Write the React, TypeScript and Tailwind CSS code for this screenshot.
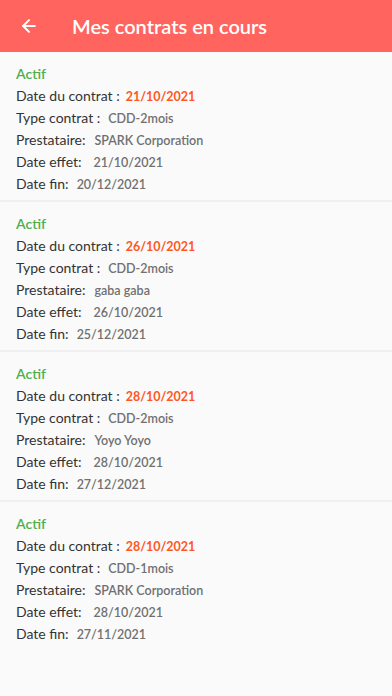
import { ArrowLeft } from "lucide-react";

type Contract = {
  date: string;
  type: string;
  provider: string;
  start: string;
  end: string;
};

const contracts: Contract[] = [
  { date: "21/10/2021", type: "CDD-2mois", provider: "SPARK Corporation", start: "21/10/2021", end: "20/12/2021" },
  { date: "26/10/2021", type: "CDD-2mois", provider: "gaba gaba", start: "26/10/2021", end: "25/12/2021" },
  { date: "28/10/2021", type: "CDD-2mois", provider: "Yoyo Yoyo", start: "28/10/2021", end: "27/12/2021" },
  { date: "28/10/2021", type: "CDD-1mois", provider: "SPARK Corporation", start: "28/10/2021", end: "27/11/2021" },
];

function Row({ label, value, gap }: { label: string; value: string; gap: string }) {
  return (
    <div className="flex h-[22px] items-baseline pt-[1px]">
      <span className="text-[14px] text-[#333]">{label}</span>
      <span className={`${gap} text-[12.5px] font-semibold text-[#707070]`}>{value}</span>
    </div>
  );
}

export default function App() {
  return (
    <div className="min-h-[696px] bg-[#fafafa] font-['Lato',sans-serif]">
      {/* Top bar */}
      <header className="flex h-[52px] items-center bg-[#ff645e] px-[19px]">
        <ArrowLeft className="h-[20px] w-[20px] text-white" strokeWidth={2.4} />
        <h1 className="ml-[33px] text-[20px] font-semibold text-white">Mes contrats en cours</h1>
      </header>

      {contracts.map((c, i) => (
        <div
          key={i}
          className={`px-4 pt-[10px] ${i < contracts.length - 1 ? "border-b-2 border-[#f0f0f0] pb-[6px]" : "pb-[8px]"}`}
        >
          <div className="flex h-[22px] items-center text-[14px] font-semibold text-[#4caf50]">Actif</div>
          <div className="flex h-[22px] items-baseline pt-[1px]">
            <span className="text-[14px] text-[#333]">Date du contrat :</span>
            <span className="ml-[6px] text-[12.5px] font-bold text-[#ff5722]">{c.date}</span>
          </div>
          <Row label="Type contrat :" value={c.type} gap="ml-[8px]" />
          <Row label="Prestataire:" value={c.provider} gap="ml-[9px]" />
          <Row label="Date effet:" value={c.start} gap="ml-[12px]" />
          <Row label="Date fin:" value={c.end} gap="ml-[8px]" />
        </div>
      ))}
    </div>
  );
}
